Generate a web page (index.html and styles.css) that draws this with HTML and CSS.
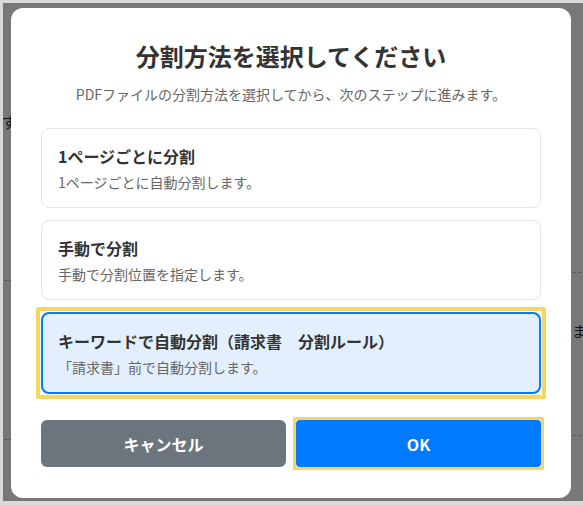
FILE: index.html
```html
<!DOCTYPE html>
<html lang="ja">
<head>
<meta charset="utf-8">
<title>分割方法を選択してください</title>
<link rel="stylesheet" href="styles.css">
</head>
<body>
<div class="backdrop">
  <div class="gutter gutter-left">
    <span class="bg-glyph glyph-left">ず</span>
    <span class="bg-rule rule-a"></span>
    <span class="bg-rule rule-b"></span>
  </div>
  <div class="modal" role="dialog" aria-labelledby="dlg-title">
    <h1 class="modal-title" id="dlg-title">分割方法を選択してください</h1>
    <p class="modal-subtitle">PDFファイルの分割方法を選択してから、次のステップに進みます。</p>
    <div class="options">
      <div class="option">
        <div class="option-title">1ページごとに分割</div>
        <div class="option-desc">1ページごとに自動分割します。</div>
      </div>
      <div class="option">
        <div class="option-title">手動で分割</div>
        <div class="option-desc">手動で分割位置を指定します。</div>
      </div>
      <div class="option option-selected">
        <div class="option-title">キーワードで自動分割（請求書　分割ルール）</div>
        <div class="option-desc">「請求書」前で自動分割します。</div>
      </div>
    </div>
    <div class="actions">
      <button class="btn btn-cancel" type="button">キャンセル</button>
      <button class="btn btn-ok" type="button">OK</button>
    </div>
  </div>
  <div class="gutter gutter-right">
    <span class="bg-rule rule-c"></span>
    <span class="bg-glyph glyph-right">ま</span>
    <span class="bg-rule rule-d"></span>
  </div>
</div>
</body>
</html>
```

FILE: styles.css
```css
* {
  box-sizing: border-box;
}

html, body {
  margin: 0;
  padding: 0;
}

body {
  background: #d9d9d9;
  font-family: "Noto Sans CJK JP", "Noto Sans", sans-serif;
  width: 583px;
  height: 505px;
  overflow: hidden;
}

.backdrop {
  margin: 3px 0 0 3px;
  height: 498px;
  background: #787878;
  display: grid;
  grid-template-columns: 8px 560px 1fr;
  align-items: start;
  padding-top: 5px;
}

.gutter {
  height: 490px;
  overflow: hidden;
  display: flex;
  flex-direction: column;
}

.bg-glyph {
  color: #111;
  font-size: 15px;
  line-height: 16px;
  white-space: nowrap;
}

.glyph-left {
  margin-top: 106px;
  margin-left: -1px;
}

.glyph-right {
  margin-top: 50px;
  margin-left: 1px;
}

.bg-rule {
  display: block;
  border-top: 1px dashed #555;
  width: 8px;
}

.rule-a {
  margin-top: 150px;
  margin-left: 1px;
}

.rule-b {
  margin-top: 158px;
  margin-left: 1px;
}

.rule-c {
  margin-top: 264px;
  margin-left: 2px;
}

.rule-d {
  margin-top: 96px;
  margin-left: 2px;
}

.modal {
  background: #fff;
  border-radius: 12px;
  padding: 30px 30px 29px;
  height: 490px;
}

.modal-title {
  margin: 0 0 10px;
  font-size: 24px;
  line-height: 36px;
  font-weight: 700;
  color: #333;
  text-align: center;
}

.modal-subtitle {
  margin: 0 0 24px;
  font-size: 14px;
  line-height: 20px;
  color: #666;
  text-align: center;
}

.options {
  display: flex;
  flex-direction: column;
  gap: 12px;
}

.option {
  position: relative;
  border: 1px solid #e2e5e9;
  border-radius: 8px;
  padding: 15px 16px;
  background: #fff;
}

.option-title {
  font-size: 16px;
  line-height: 24px;
  font-weight: 700;
  color: #333;
  margin-bottom: 4px;
}

.option-desc {
  font-size: 14px;
  line-height: 20px;
  color: #666;
}

.option-selected {
  border: 2px solid #007bff;
  background: #e3effc;
  padding: 15px 15px;
}

.option-selected::before {
  content: "";
  position: absolute;
  top: -7px;
  left: -7px;
  right: -7px;
  bottom: -7px;
  border: 4px solid #f8d55e;
  border-radius: 2px;
  pointer-events: none;
}

.actions {
  display: flex;
  gap: 10px;
  margin-top: 26px;
}

.btn {
  position: relative;
  flex: 1;
  height: 47px;
  border: none;
  border-radius: 6px;
  color: #fff;
  font-family: "Noto Sans CJK JP", "Noto Sans", sans-serif;
  font-size: 16px;
  font-weight: 700;
  padding: 0;
  cursor: pointer;
}

.btn-cancel {
  background: #6c757d;
}

.btn-ok {
  background: #007bff;
  border-radius: 4px;
}

.btn-ok::before {
  content: "";
  position: absolute;
  top: -3px;
  left: -3px;
  right: -3px;
  bottom: -3px;
  border: 3px solid #f8d55e;
  border-radius: 2px;
  pointer-events: none;
}
```
